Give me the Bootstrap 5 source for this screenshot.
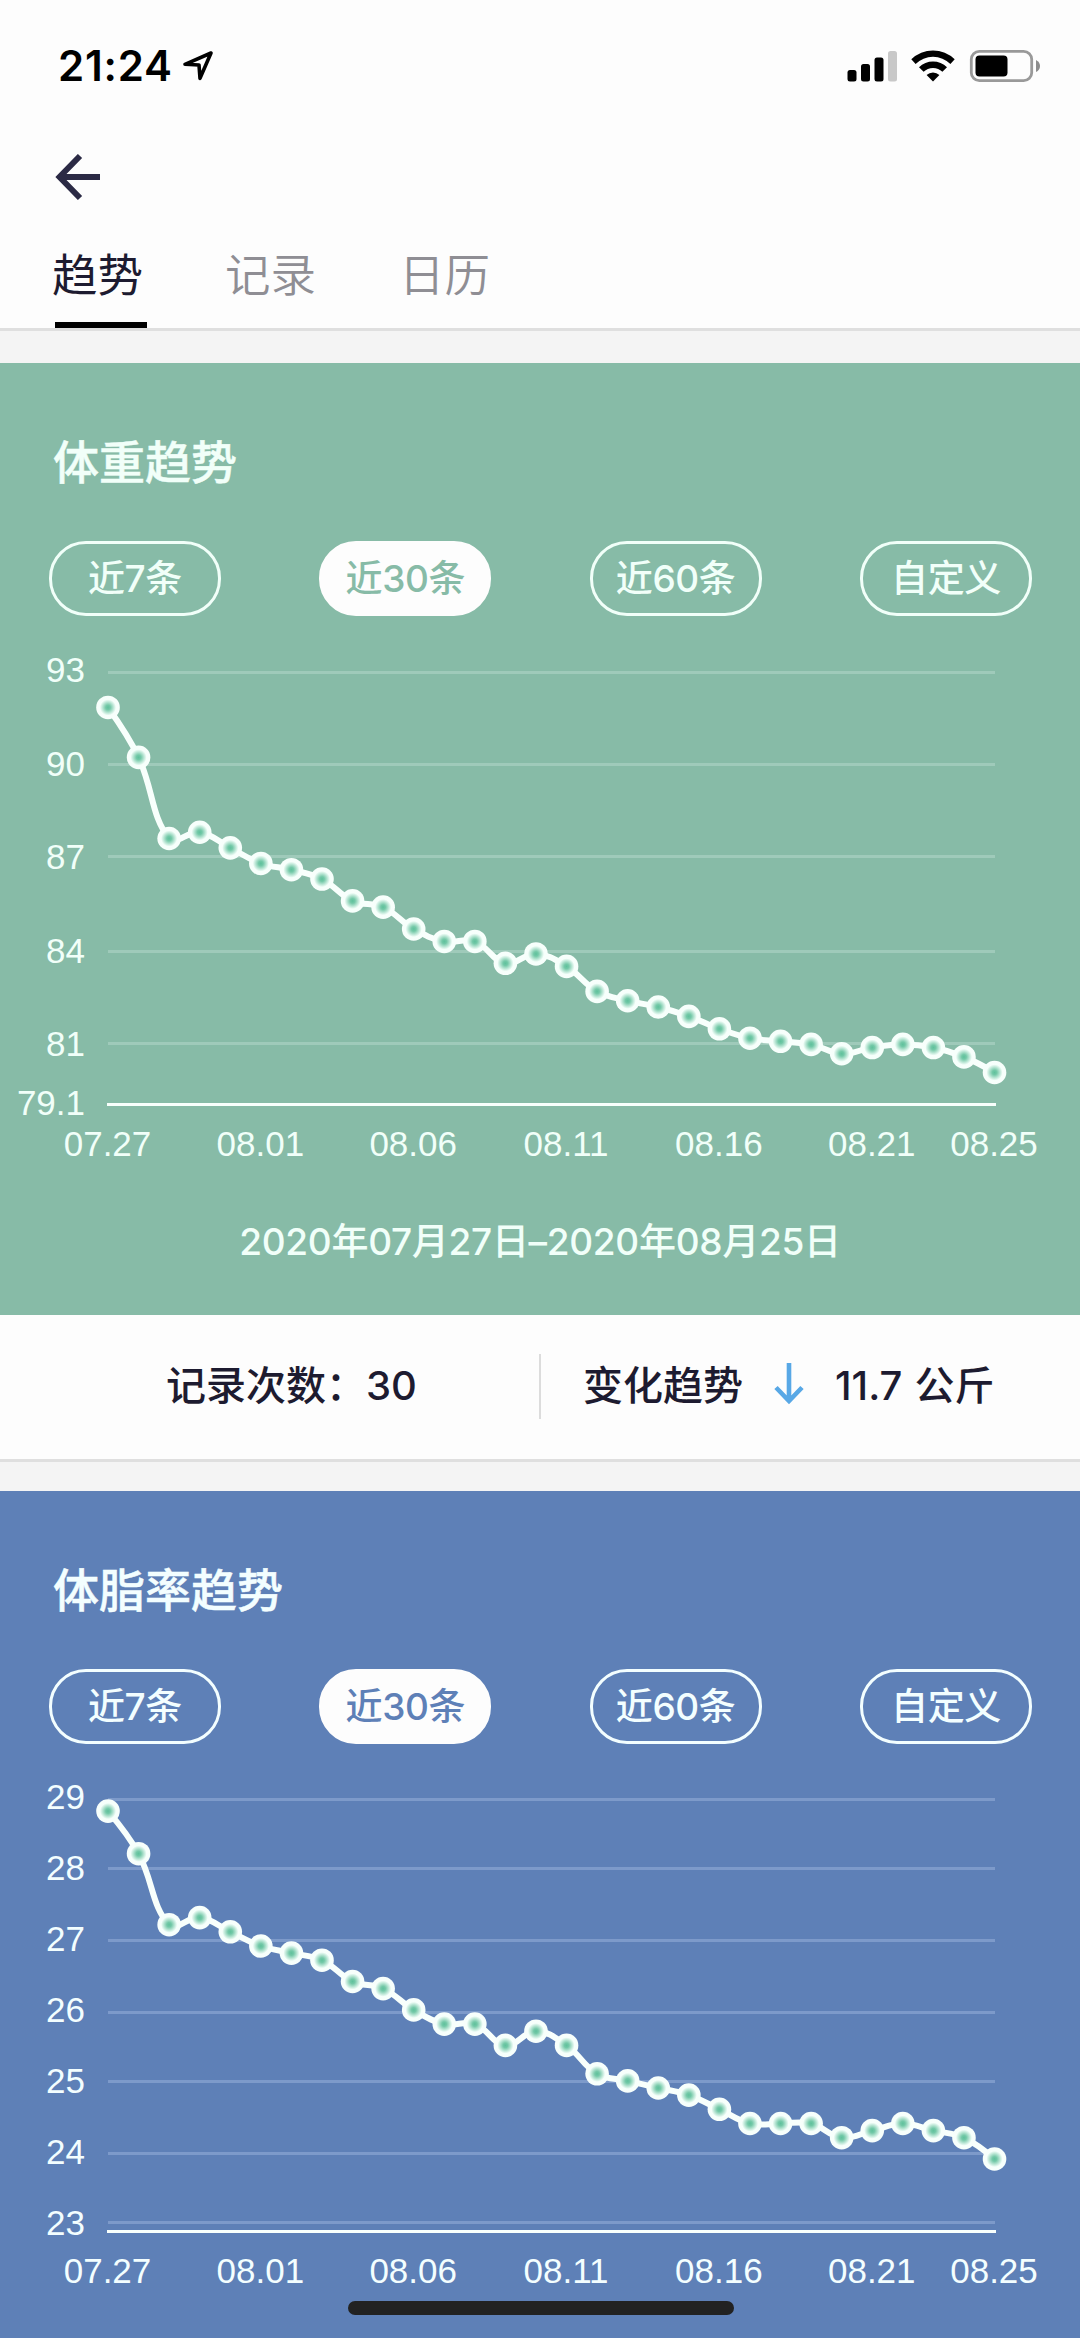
<!DOCTYPE html>
<html lang="zh-CN">
<head>
<meta charset="utf-8">
<meta name="viewport" content="width=device-width, initial-scale=1">
<title>趋势</title>
<link rel="stylesheet" href="https://cdn.jsdelivr.net/npm/bootstrap@5.3.0/dist/css/bootstrap.min.css">
<style>
  body { font-family: Inter, "Noto Sans CJK SC", sans-serif; background: #f4f4f4; color: #1d1b30; width: 1080px; height: 2338px; overflow: hidden; line-height: 1; }
  .app-head { background: #fdfdfd; height: 331px; border-bottom: 3px solid #dfdfdf; }
  .status { height: 132px; padding: 0 39px 0 58px; color: #000; }
  .clock { font-size: 42px; font-weight: 600; letter-spacing: 0.8px; }
  .back { height: 89px; padding-left: 55px; }
  .tabs { height: 107px; padding-left: 52px; gap: 80px; font-size: 45.5px; color: #8f8e94; font-weight: 350; }
  .tabs .nav-link { padding: 0; color: inherit; height: 107px; padding-top: 30px; line-height: 50px; }
  .tabs .nav-link.active { color: #1d1b30; font-weight: 400; border-radius: 0; background: linear-gradient(#000, #000) 3px 100% / 92px 6px no-repeat; width: 95px; }
  .tabs .nav-link:nth-child(2) { margin-left: -2px; margin-right: 3px; }
  .trend { margin-top: 32px; color: #f6fffb; }
  .trend-green { --tone: #87bba7; --rule: #9fcaba; --ink: #f1fff9; height: 952px; background: var(--tone); }
  .trend-blue { --tone: #5e80b7; --rule: #7d9aca; --ink: #f3feff; margin-top: 29px; height: 847px; background: var(--tone); }
  .trend h2 { font-size: 46px; font-weight: 500; line-height: 60px; margin: 0; padding: 69px 0 0 53px; color: var(--ink); -webkit-text-stroke: 0.5px var(--ink); }
  .ranges { padding: 49px 48px 0 49px; }
  .range-btn { width: 172px; height: 75px; border: 3px solid var(--ink); border-radius: 37px; color: var(--ink); font-size: 37px; font-weight: 500; padding: 0 0 1px 0; line-height: 1; letter-spacing: -0.4px; }
  .range-btn.active { background: #fdfdfd !important; border-color: #fdfdfd !important; color: var(--tone) !important; }
  .plot { display: block; }
  .plot text { font-family: "Liberation Sans", sans-serif; font-size: 35px; fill: var(--ink); }
  .period { font-size: 37px; font-weight: 500; color: var(--ink); height: 56px; letter-spacing: -0.3px; }
  .stats { height: 147px; background: #fdfdfd; border-bottom: 3px solid #dfdfdf; font-size: 40px; font-weight: 500; padding-bottom: 2px; }
  .stat-cell { width: 539px; }
  .stat-count { padding-left: 166px; }
  .stat-change { padding-left: 42px; }
  .stat-arrow { margin: 0 30px 4px; }
  .stats .split { width: 2px; height: 65px; background: #dcdcdc; }
  .home-bar { position: fixed; left: 348px; top: 2301px; width: 386px; height: 14px; background: #222; border-radius: 7px; }
</style>
<script src="https://cdn.jsdelivr.net/npm/bootstrap@5.3.0/dist/js/bootstrap.bundle.min.js"></script>
</head>
<body>
<header class="app-head">
  <div class="status d-flex align-items-center justify-content-between">
    <div class="d-flex align-items-center">
      <span class="clock">21:24</span>
      <svg class="ms-2" width="32" height="32" viewBox="0 0 32 32" fill="none" stroke="#000" stroke-width="3.6" stroke-linejoin="round"><path d="M4 14.3 30 3 19 28.3 18 15Z"/></svg>
    </div>
    <svg width="194" height="34" viewBox="0 0 194 34">
      <g><rect x=".5" y="21" width="9" height="11.5" rx="2.5"/><rect x="14" y="15" width="9" height="17.5" rx="2.5"/><rect x="27.5" y="8.5" width="9" height="24" rx="2.5"/><rect x="41" y="2" width="9" height="30.5" rx="2.5" fill="#c8c8c8"/></g>
      <g><path d="M64.3 10.3a31 31 0 0 1 43.4 0L103.4 15a24.6 24.6 0 0 0-34.8 0Z"/><path d="M72 18.2a20 20 0 0 1 28 0L95.4 22.8a13.5 13.5 0 0 0-18.8 0Z"/><path d="M79.6 26a9.3 9.3 0 0 1 12.8 0L86 32.5Z"/></g>
      <rect x="124.3" y="2.3" width="60.4" height="29.4" rx="8" fill="none" stroke="#999" stroke-width="2.8"/>
      <rect x="128.5" y="6.5" width="32" height="21" rx="4"/>
      <path d="M189 11q4 2 4 6t-4 6Z" fill="#8c8c8c"/>
    </svg>
  </div>
  <div class="back d-flex align-items-center">
    <svg width="46" height="46" viewBox="0 0 46 46" fill="none" stroke="#2b2a45" stroke-width="5.9"><path d="M25 2 4.5 23 25 44M4.5 23H45"/></svg>
  </div>
  <nav class="tabs nav flex-nowrap">
    <a class="nav-link active">趋势</a><a class="nav-link">记录</a><a class="nav-link">日历</a>
  </nav>
</header>

<section class="trend trend-green">
  <h2>体重趋势</h2>
  <div class="ranges d-flex justify-content-between">
    <button class="btn range-btn">近7条</button><button class="btn range-btn active">近30条</button><button class="btn range-btn">近60条</button><button class="btn range-btn">自定义</button>
  </div>
  <svg class="plot" id="weight" width="1080" height="597" viewBox="0 616 1080 597"></svg>
  <div class="period d-flex align-items-center justify-content-center">2020年07月27日–2020年08月25日</div>
</section>
<div class="stats d-flex align-items-center">
  <div class="stat-cell stat-count">记录次数：30</div>
  <div class="split"></div>
  <div class="stat-cell stat-change d-flex align-items-center">
    <span>变化趋势</span>
    <svg class="stat-arrow" width="32" height="42" viewBox="0 0 32 42" fill="none" stroke="#58a8e6" stroke-width="4.6"><path d="M16 0V38M3 24.5 16 38 29 24.5"/></svg>
    <span>11.7</span><span class="ms-2 ps-1">公斤</span>
  </div>
</div>

<section class="trend trend-blue">
  <h2>体脂率趋势</h2>
  <div class="ranges d-flex justify-content-between">
    <button class="btn range-btn">近7条</button><button class="btn range-btn active">近30条</button><button class="btn range-btn">近60条</button><button class="btn range-btn">自定义</button>
  </div>
  <svg class="plot" id="bodyfat" width="1080" height="594" viewBox="0 1744 1080 594"></svg>
</section>
<div class="home-bar"></div>

<script>
const X0 = 108.2, STEP = 30.57, SMOOTH = 0.4;
const DATES = [[0,'07.27'],[5,'08.01'],[10,'08.06'],[15,'08.11'],[20,'08.16'],[25,'08.21'],[29,'08.25']];

// Smooth curve through the points; each handle follows the prev-to-next direction
function curve(p) {
  const h = p.map((c, i) => {
    const a = p[i - 1], b = p[i + 1];
    if (!a || !b) return [c, c];
    const vx = b[0] - a[0], vy = b[1] - a[1];
    const la = Math.hypot(c[0] - a[0], c[1] - a[1]), lb = Math.hypot(b[0] - c[0], b[1] - c[1]);
    const r = lb / (la + lb);
    return [[c[0] - vx * SMOOTH * (1 - r), c[1] - vy * SMOOTH * (1 - r)], [c[0] + vx * SMOOTH * r, c[1] + vy * SMOOTH * r]];
  });
  let d = 'M' + p[0];
  for (let i = 1; i < p.length; i++) d += 'C' + h[i - 1][1] + ' ' + h[i][0] + ' ' + p[i];
  return d;
}

function draw(id, cfg) {
  let s = `<defs><radialGradient id="${id}-dot"><stop offset="0" stop-color="#5fc19c"/><stop offset=".2" stop-color="#74c9a8"/><stop offset=".68" stop-color="#f6fffb"/><stop offset="1" stop-color="#f8fffc"/></radialGradient></defs>`;
  for (const y of cfg.rules) s += `<rect x="108" y="${y - 1.5}" width="887" height="3" fill="var(--rule)"/>`;
  s += `<rect x="107" y="${cfg.base - 1.5}" width="889" height="3" fill="#f8fffc"/>`;
  for (const [y, t] of cfg.labels) s += `<text x="85" y="${y + 12}" text-anchor="end">${t}</text>`;
  for (const [i, t] of DATES) s += `<text x="${X0 - 0.7 + i * STEP}" y="${cfg.dateY}" text-anchor="middle">${t}</text>`;
  const pts = cfg.data.map((v, i) => [X0 - 0.2 + i * STEP, cfg.lastY - (v - cfg.data[29]) * cfg.unit]);
  s += `<path d="${curve(pts)}" fill="none" stroke="#f8fffc" stroke-width="6"/>`;
  for (const [x, y] of pts) s += `<circle cx="${x}" cy="${y}" r="11.8" fill="url(#${id}-dot)"/>`;
  document.getElementById(id).innerHTML = s;
}

draw('weight', {
  rules: [672.5, 764.5, 856.5, 951.5, 1043.5], base: 1104.5, dateY: 1156, lastY: 1072.5, unit: 31.2,
  labels: [[670.3,'93'],[763.7,'90'],[857,'87'],[950.5,'84'],[1043.7,'81'],[1103.2,'79.1']],
  data: [91.8,90.2,87.6,87.8,87.3,86.8,86.6,86.3,85.6,85.4,84.7,84.3,84.3,83.6,83.9,83.5,82.7,82.4,82.2,81.9,81.5,81.2,81.1,81.0,80.7,80.9,81.0,80.9,80.6,80.1]
});
draw('bodyfat', {
  rules: [1799.5, 1868.5, 1940.5, 2012.5, 2081.5, 2153.5, 2222.5], base: 2231.5, dateY: 2283, lastY: 2159, unit: 71,
  labels: [[1797,'29'],[1868,'28'],[1939,'27'],[2010,'26'],[2081,'25'],[2152,'24'],[2223,'23']],
  data: [28.8,28.2,27.2,27.3,27.1,26.9,26.8,26.7,26.4,26.3,26.0,25.8,25.8,25.5,25.7,25.5,25.1,25.0,24.9,24.8,24.6,24.4,24.4,24.4,24.2,24.3,24.4,24.3,24.2,23.9]
});
</script>
</body>
</html>
